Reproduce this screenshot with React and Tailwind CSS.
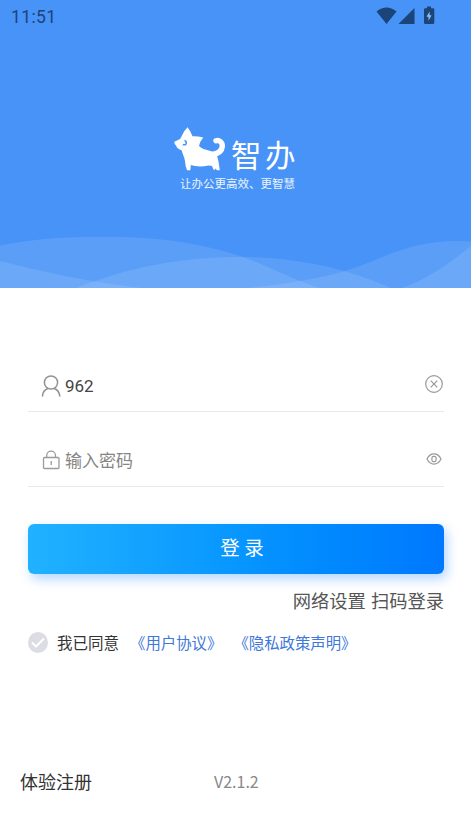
import React from 'react';

function StatusBar() {
  return (
    <div className="flex h-8 items-center justify-between pl-[11px] pr-[36px] text-[#1b4479]">
      <span className="pt-[2px] font-['Roboto',sans-serif] text-[17.5px] leading-5 tracking-[0.4px]">11:51</span>
      <svg width="59" height="20" viewBox="376 6 59 20" fill="currentColor">
        <path d="M376.5 11.5Q386.500 3.500 396.500 11.500L386.500 24Z" />
        <path d="M414.500 8V24H398.500Z" />
        <path d="M427 6.500h4v1.700h2q1.300 0 1.300 1.300v13q0 1.500-1.300 1.500h-7.700q-1.300 0-1.300-1.500v-13q0-1.300 1.300-1.300H427z" />
        <path d="M429.600 11.500l-3.100 5.200h2v4l3.100-5.400h-2z" fill="#91bdf5" />
      </svg>
    </div>
  );
}

function CatLogo() {
  return (
    <svg width="54" height="46" viewBox="173 126 54 46" fill="none">
      <path
        d="M187.500 127.300Q184 130.500 181.500 136.500Q181 138.800 178 140L174.300 141.800Q174.300 144.800 176 145.500C177 148.500 179.500 149.800 181.800 150.500C182.300 154 184.500 157 185 161Q185.200 166 187 170.200H190.300L190.800 165C195 166.500 202 167 208.500 165.500L212 166Q213 169.500 214.500 170.300L215.500 168.500L217 170.300H219.800Q219 162 217 155.500C214 149.500 204 151.500 199 146Q199.500 142 203.300 137.500Q198 136.200 192.500 136.300Q190.300 130.500 187.500 127.300Z"
        fill="#fff"
      />
      <path d="M212 154.500C218.500 153.800 222 150.500 222.300 146.300C222.500 142 219 139.700 216 140.700" stroke="#fff" strokeWidth="5.400" strokeLinecap="round" />
      <path d="M182.800 144.500Q186.500 145.500 186.300 142.500Q186 140.800 184.500 140.500" stroke="#4893f8" strokeWidth="1.5" />
    </svg>
  );
}

function Waves() {
  return (
    <svg className="mt-auto block w-full" height="56" viewBox="0 232 471 56" fill="#fff" fillOpacity="0.105">
      <path d="M0 245.500C42 237 85 236 119 237C163 238 200 243 240 256C267 265 286 277 320 288H0Z" />
      <path d="M0 261C40 271 82 281 142 288H0Z" />
      <path d="M76 288C103 278 126 270 160 264C192 258 224 256 260 257.500C310 260 353 271 391 288Z" />
      <path d="M246 288C288 284 321 278 345 271C377 261 400 247 430 243Q449 240 471 241.500V288Z" />
      <path d="M402 288Q432 278 471 246V288Z" />
    </svg>
  );
}

function UserIcon() {
  return (
    <svg width="20" height="24" viewBox="41 373 20 24" fill="none" stroke="#929292" strokeWidth="1.5" strokeLinecap="round">
      <circle cx="51" cy="381.500" r="6.600" />
      <path d="M42.500 395Q43 389 48 387.500M54 387.500Q59 389 59.800 395" />
    </svg>
  );
}

function LockIcon() {
  return (
    <svg width="20" height="22" viewBox="41 449 20 22" fill="none" stroke="#9b9b9b" strokeWidth="1.3">
      <rect x="43.500" y="457.500" width="15.500" height="11" rx="1" />
      <path d="M46.700 457v-1.500a4.400 4.400 0 0 1 8.800 0v1.500M51.200 461v4" />
    </svg>
  );
}

function ClearIcon() {
  return (
    <svg width="20" height="20" viewBox="0 0 20 20" fill="none" stroke="#999" strokeWidth="1.2">
      <circle cx="10" cy="10" r="8.300" />
      <path d="M6.700 6.700l6.600 6.600M13.300 6.700l-6.600 6.600" />
    </svg>
  );
}

function EyeIcon() {
  return (
    <svg width="20" height="20" viewBox="0 0 20 20" fill="none" stroke="#999" strokeWidth="1.200">
      <path d="M3 10Q5.500 4.900 10 4.900T17 10Q14.500 15.100 10 15.100T3 10Z" />
      <rect x="7.900" y="7.300" width="4.200" height="5.400" rx="1.800" />
    </svg>
  );
}

export default function App() {
  return (
    <div className="flex h-[838px] w-[471px] flex-col overflow-hidden bg-white font-['Noto_Sans_CJK_SC',sans-serif]">
      <header className="flex h-[288px] shrink-0 flex-col bg-[#4893f8]">
        <StatusBar />
        <div className="mt-[94px] flex h-[46px] pl-[173px] text-white">
          <CatLogo />
          <span className="ml-[4px] mt-[11px] whitespace-nowrap text-[30.500px] font-normal leading-[34px] tracking-[3.500px]">智办</span>
        </div>
        <p className="mt-[2px] whitespace-nowrap pl-[180px] text-[11.500px] leading-[18px] text-white/90">让办公更高效、更智慧</p>
        <Waves />
      </header>

      <main className="flex flex-col pl-[28px] pr-[27px] pt-[72px]">
        <div className="flex h-[52px] items-center border-b border-[#e9e9e9] pl-[13px]">
          <UserIcon />
          <span className="ml-[4px] font-['Roboto',sans-serif] text-[17px] leading-6 text-[#444]">962</span>
          <span className="ml-auto pb-[3px]"><ClearIcon /></span>
        </div>
        <div className="mt-[23px] flex h-[52px] items-center border-b border-[#e9e9e9] pb-[2px] pl-[13px]">
          <LockIcon />
          <span className="ml-[4px] text-[17px] leading-6 text-[#858585]">输入密码</span>
          <span className="ml-auto pb-px"><EyeIcon /></span>
        </div>
        <button className="mt-[37px] h-[50px] rounded-md bg-linear-to-r from-[#20b2ff] to-[#0078ff] pb-[5px] pl-[12px] text-[19.500px] leading-6 text-white shadow-[3px_5px_12px_rgba(0,120,255,0.3)]">登 录</button>
        <div className="mt-[13px] flex justify-end gap-[5px] text-[18.300px] leading-[26px] text-[#555]">
          <span>网络设置</span>
          <span>扫码登录</span>
        </div>
        <div className="mt-[16px] flex h-[26px] items-center whitespace-nowrap text-[15.500px] leading-6 text-[#333]">
          <svg width="20" height="21" viewBox="0 0 20 21" fill="none">
            <ellipse cx="10" cy="10.500" rx="10" ry="10.500" fill="#dcdde4" />
            <path d="M4 10.500l4 4 8-8" stroke="#fff" strokeWidth="2" />
          </svg>
          <span className="ml-[9px]">我已同意</span>
          <span className="ml-[11px] text-[15.400px] text-[#3e78d8]">《用户协议》</span>
          <span className="ml-[11px] text-[15.400px] text-[#3e78d8]">《隐私政策声明》</span>
        </div>
      </main>

      <footer className="mt-auto flex h-[70px] pl-[20px]">
        <span className="w-[194px] text-[18px] leading-[26px] text-[#333]">体验注册</span>
        <span className="text-[16px] leading-[26px] text-[#888]">V2.1.2</span>
      </footer>
    </div>
  );
}
